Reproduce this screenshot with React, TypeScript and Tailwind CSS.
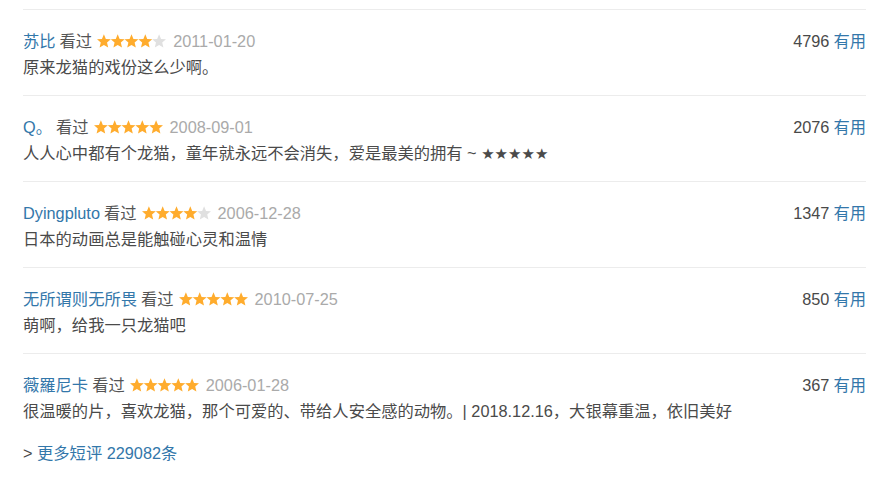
import React from "react";

type Item = { name: string; rating: number; date: string; votes: string; text: React.ReactNode };

const items: Item[] = [
  { name: "苏比", rating: 4, date: "2011-01-20", votes: "4796", text: "原来龙猫的戏份这么少啊。" },
  {
    name: "Q。",
    rating: 5,
    date: "2008-09-01",
    votes: "2076",
    text: (
      <>
        人人心中都有个龙猫，童年就永远不会消失，爱是最美的拥有 ~{" "}
        <span style={{ fontFamily: '"DejaVu Sans", sans-serif' }} className="text-[15px]">★★★★★</span>
      </>
    ),
  },
  { name: "Dyingpluto", rating: 4, date: "2006-12-28", votes: "1347", text: "日本的动画总是能触碰心灵和温情" },
  { name: "无所谓则无所畏", rating: 5, date: "2010-07-25", votes: "850", text: "萌啊，给我一只龙猫吧" },
  { name: "薇羅尼卡", rating: 5, date: "2006-01-28", votes: "367", text: "很温暖的片，喜欢龙猫，那个可爱的、带给人安全感的动物。| 2018.12.16，大银幕重温，依旧美好" },
];

function starPoints(cx: number, cy: number, r: number) {
  const pts: string[] = [];
  for (let i = 0; i < 10; i++) {
    const rr = i % 2 === 0 ? r : r * 0.45;
    const a = -Math.PI / 2 + (i * Math.PI) / 5;
    pts.push(`${(cx + rr * Math.cos(a)).toFixed(2)},${(cy + rr * Math.sin(a)).toFixed(2)}`);
  }
  return pts.join(" ");
}

function Stars({ n }: { n: number }) {
  return (
    <svg width="69" height="14" viewBox="0 0 69 14" className="inline-block ml-[5px] mr-[7px]">
      {[0, 1, 2, 3, 4].map((i) => (
        <polygon key={i} points={starPoints(6.9 + i * 13.8, 7.6, 7.3)} fill={i < n ? "#ffac2d" : "#e0e0e0"} />
      ))}
    </svg>
  );
}

export default function App() {
  return (
    <div
      className="w-[896px] h-[479px] bg-white pt-[9px] pl-[23px] pr-[30px] text-[16.3px]"
      style={{ fontFamily: '"Liberation Sans", Arial, "Noto Sans CJK SC", sans-serif' }}
    >
      {items.map((it, idx) => (
        <div key={idx} className="border-t border-[#ececec] pt-[18px] pb-[14px]">
          <div className="flex items-center justify-between h-[26px]">
            <div className="flex items-center whitespace-pre">
              <span className="text-[#3377aa]">{it.name}</span>
              <span className="text-[#555555] ml-[4px]">看过</span>
              <Stars n={it.rating} />
              <span className="text-[#aaaaaa]">{it.date}</span>
            </div>
            <div className="whitespace-pre">
              <span className="text-[#494949]">{it.votes}</span>
              <span className="text-[#3377aa] ml-[4px]">有用</span>
            </div>
          </div>
          <div className="h-[27px] leading-[27px] text-[#4a4a4a]">{it.text}</div>
        </div>
      ))}
      <div className="h-[28px] leading-[28px]">
        <span className="text-[#494949]">&gt; </span>
        <span className="text-[#3377aa]">更多短评 229082条</span>
      </div>
    </div>
  );
}
